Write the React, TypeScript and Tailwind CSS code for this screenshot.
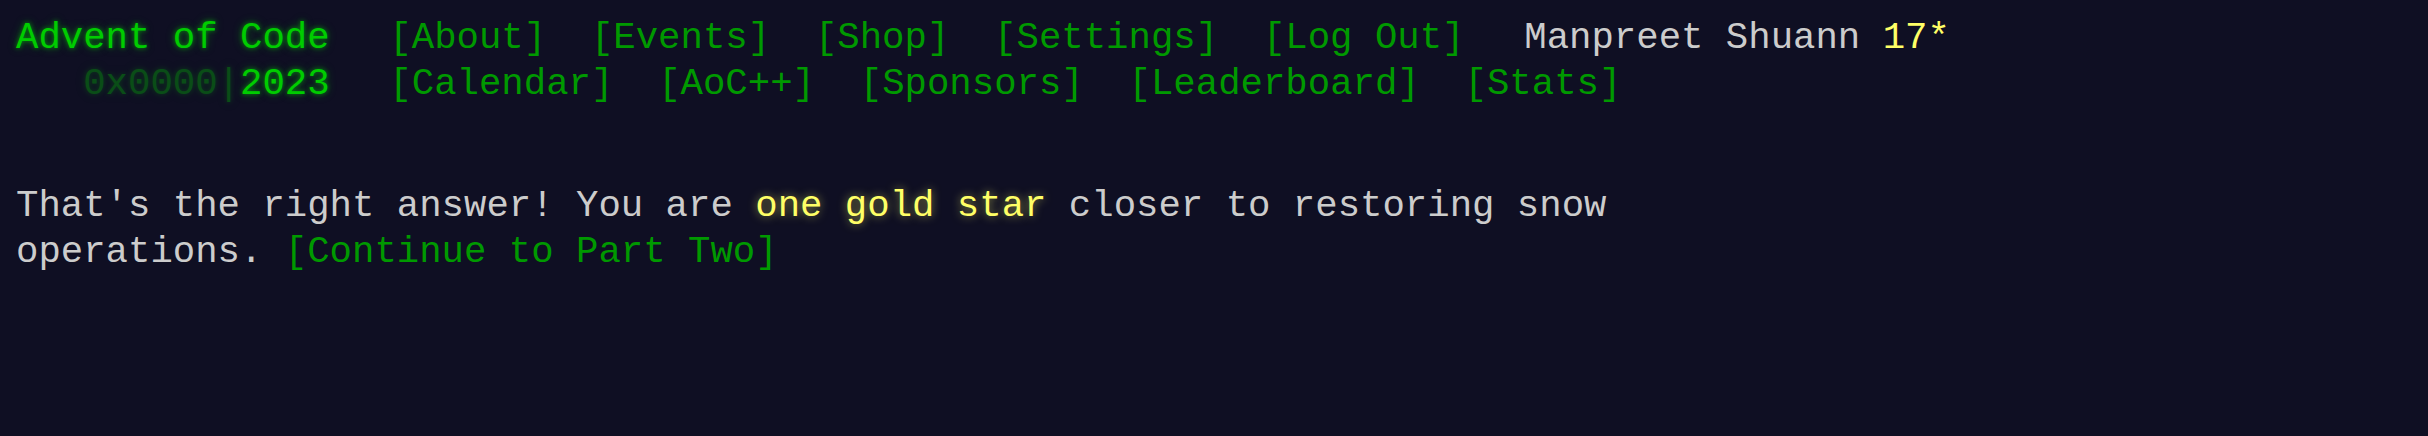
import React from "react";

const nav1 = ["[About]", "[Events]", "[Shop]", "[Settings]", "[Log Out]"];
const nav2 = ["[Calendar]", "[AoC++]", "[Sponsors]", "[Leaderboard]", "[Stats]"];

function NavList({ items }: { items: string[] }) {
  return (
    <nav>
      <ul className="flex">
        {items.map((t) => (
          <li key={t} className="px-[0.6em]">
            <a href="#" className="text-[#009900]">
              {t}
            </a>
          </li>
        ))}
      </ul>
    </nav>
  );
}

export default function App() {
  return (
    <div className="min-h-screen bg-[#0f0f23] text-[#cccccc] font-['Liberation_Mono','DejaVu_Sans_Mono',monospace] text-[37.33px] leading-[46px] px-4 pt-[15px]">
      <header className="whitespace-pre mb-[76px]">
        <div className="flex">
          <h1 className="pr-[1em] font-normal text-[#00cc00] [text-shadow:0_0_4px_#00cc0099,0_0_10px_#00cc0066]">
            Advent of Code
          </h1>
          <NavList items={nav1} />
          <div className="pl-[1em]">
            Manpreet Shuann <span className="text-[#ffff66]">17*</span>
          </div>
        </div>
        <div className="flex">
          <h1 className="pr-[1em] font-normal text-[#00cc00] [text-shadow:0_0_4px_#00cc0099,0_0_10px_#00cc0066]">
            {"\u00a0\u00a0\u00a0"}
            <span className="opacity-[0.33]">0x0000|</span>
            <a href="#">2023</a>
          </h1>
          <NavList items={nav2} />
        </div>
      </header>
      <main>
        <article className="w-[1680px]">
          <p>
            That's the right answer! You are{" "}
            <em className="not-italic text-[#ffff66] [text-shadow:0_0_10px_#ffff6688]">one gold star</em>{" "}
            closer to restoring snow operations.{" "}
            <a href="#" className="text-[#009900]">
              [Continue to Part Two]
            </a>
          </p>
        </article>
      </main>
    </div>
  );
}
